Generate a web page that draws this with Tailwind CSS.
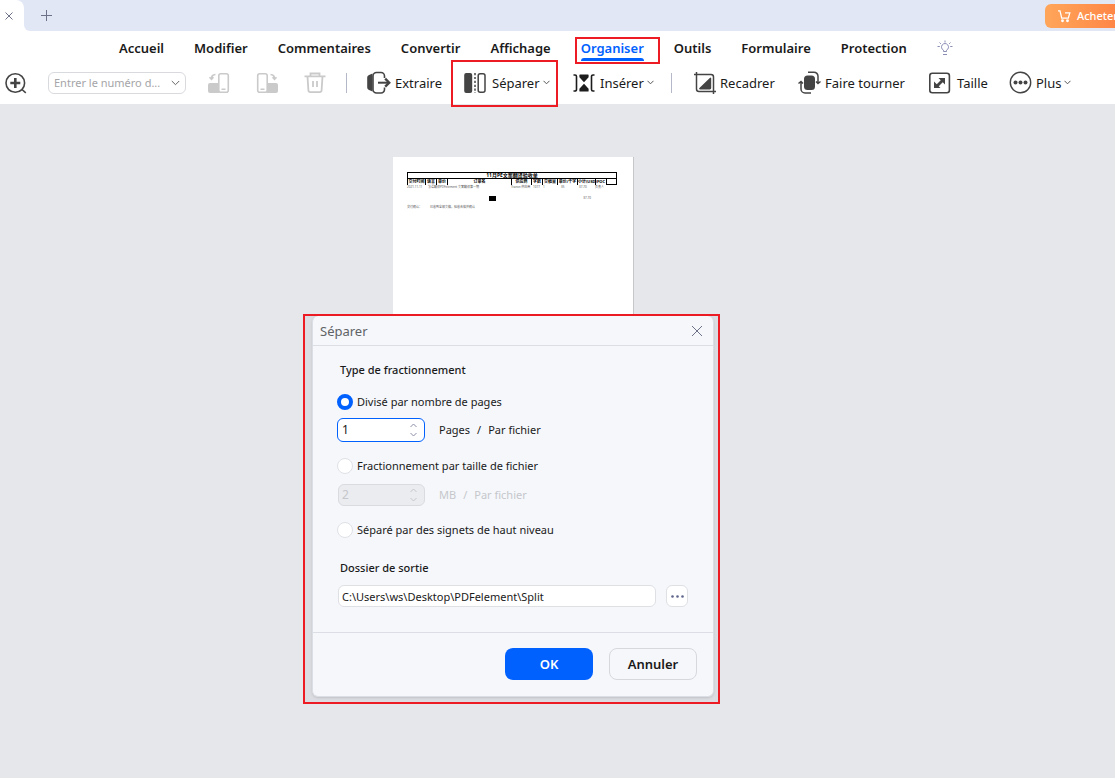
<!DOCTYPE html>
<html lang="fr">
<head>
<meta charset="utf-8">
<title>PDFelement – Organiser</title>
<meta name="viewport" content="width=device-width, initial-scale=1">
<script src="https://cdn.jsdelivr.net/npm/@tailwindcss/browser@4"></script>
</head>
<body class="flex h-screen flex-col overflow-hidden bg-[#e6e7eb] font-['Noto_Sans','Noto_Sans_CJK_SC',sans-serif] text-[13px] leading-5 text-[#1a1a1a]">

<header class="shrink-0 bg-white">
  <!-- Tab strip -->
  <div class="flex h-[31px]">
    <div class="bg-[#e1e7f4]">
      <div class="flex h-full w-6 items-center rounded-tr-lg bg-white pl-1">
        <button type="button" aria-label="Fermer l'onglet" class="text-[#6d7288]">
          <svg class="block size-[10px]" viewBox="0 0 10 10" fill="none" stroke="currentColor"><path d="M1.500 1.500l7 7M8.500 1.500l-7 7"/></svg>
        </button>
      </div>
    </div>
    <div class="flex flex-1 items-center justify-between overflow-hidden rounded-bl-md bg-[#e1e7f4] pl-4">
      <button type="button" aria-label="Nouvel onglet" class="text-[#6d7288]">
        <svg class="block size-[13px]" viewBox="0 0 13 13" fill="none" stroke="currentColor"><path d="M6.500 1v11M1 6.500h11"/></svg>
      </button>
      <button type="button" class="flex h-6 w-[70px] shrink-0 items-center gap-[6px] rounded-l-md bg-linear-to-r from-[#ffa65a] to-[#ff8646] pl-3 text-[11px] font-medium whitespace-nowrap text-white">
        <svg class="block size-[14px] shrink-0" viewBox="0 0 14 14" fill="none" stroke="currentColor" stroke-width="1.300"><path d="M1 1.800h2l1.700 7.400h6.600L12.800 3.800H8"/><circle cx="5.500" cy="11.800" r=".8"/><circle cx="10.500" cy="11.800" r=".8"/></svg>
        Acheter
      </button>
    </div>
  </div>

  <!-- Menu -->
  <nav class="flex h-[33px] items-center gap-[30px] pl-[119px] font-semibold whitespace-nowrap">
    <a href="#">Accueil</a>
    <a href="#">Modifier</a>
    <a href="#">Commentaires</a>
    <a href="#">Convertir</a>
    <a href="#">Affichage</a>
    <a href="#" class="relative text-[#0061ff]">Organiser
      <span class="absolute inset-x-0 -bottom-[3px] h-[3px] rounded-t-full bg-[#0061ff]"></span>
      <span class="absolute -top-[1px] -right-4 -bottom-[6px] -left-[6px] border-2 border-[#ed1c24]"></span>
    </a>
    <a href="#">Outils</a>
    <a href="#">Formulaire</a>
    <a href="#">Protection</a>
    <button type="button" aria-label="Astuces" class="text-[#8a8eb5]">
      <svg class="block size-4" viewBox="0 0 16 16" fill="none" stroke="currentColor"><path d="M6.500 11.500v-1.300a3.500 3.500 0 1 1 3 0v1.300zM6 14.500h4M8 .5v2M2.500 2.500l1.400 1.400M13.500 2.500l-1.400 1.400M.5 6.500h2.300M13.200 6.500h2.300"/></svg>
    </button>
  </nav>

  <!-- Toolbar -->
  <div class="flex h-10 items-center pb-[3px] whitespace-nowrap">
    <button type="button" aria-label="Zoom avant" class="ml-1 shrink-0 text-[#444]">
      <svg class="block size-6" viewBox="0 0 24 24" fill="none" stroke="currentColor" stroke-width="1.600"><circle cx="11.300" cy="12" r="9.300"/><path d="M18 18.500l3.800 3.300"/><path stroke-width="2.600" d="M11.300 7v10M6.300 12h10"/></svg>
    </button>
    <div class="relative ml-5 w-[138px] shrink-0">
      <select aria-label="Numéro de page" class="block h-[22px] w-full appearance-none rounded-md border border-[#d9dade] bg-white pr-4 pl-[5px] text-[11px] text-[#a5a5a8]"><option>Entrer le numéro d...</option></select>
      <svg class="pointer-events-none absolute top-2 right-[6px] h-[6px] w-[9px]" viewBox="0 0 9 6" fill="none" stroke="#666"><path d="M.8 1l3.700 3.700L8.200 1"/></svg>
    </div>
    <button type="button" disabled aria-label="Pivoter à gauche" class="ml-[22px] shrink-0 text-[#cacaca]">
      <svg class="block size-[22px]" viewBox="0 0 22 22" fill="none" stroke="currentColor" stroke-width="1.600"><path fill="currentColor" stroke="none" d="M2 11h9v10H2a2 2 0 0 1-2-2v-6a2 2 0 0 1 2-2z"/><rect x="10.800" y="1.700" width="9.500" height="18.600" rx="2" fill="#fff"/><path d="M13.500 17.200h4M3.500 6.500c0-2.500 1-3.800 4-4M1.500 5.300l2 2 2-2"/></svg>
    </button>
    <button type="button" disabled aria-label="Pivoter à droite" class="ml-[26px] shrink-0 text-[#cacaca]">
      <svg class="block size-[22px]" viewBox="0 0 22 22" fill="none" stroke="currentColor" stroke-width="1.600"><path fill="currentColor" stroke="none" d="M11 11h9a2 2 0 0 1 2 2v6a2 2 0 0 1-2 2h-9z"/><rect x="1.700" y="1.700" width="9.500" height="18.600" rx="2" fill="#fff"/><path d="M4.500 17.200h4M18.500 6.500c0-2.500-1-3.800-4-4M16.500 5.300l2 2 2-2"/></svg>
    </button>
    <button type="button" disabled aria-label="Supprimer" class="ml-[26px] shrink-0 text-[#cacaca]">
      <svg class="block size-[22px]" viewBox="0 0 22 22" fill="none" stroke="currentColor" stroke-width="1.800"><path d="M.5 4.300h21M6.500 4V1.500h9V4M3.500 4.500l.9 13.800a2 2 0 0 0 2 1.900h9.200a2 2 0 0 0 2-1.900l.9-13.800M9 9v6M13 9v6"/></svg>
    </button>
    <span class="ml-5 h-5 w-px shrink-0 bg-[#b5b8c8]"></span>
    <button type="button" class="ml-5 flex w-[73px] shrink-0 items-center gap-1">
      <svg class="block size-6 shrink-0" viewBox="0 0 24 24" fill="none" stroke="#444" stroke-width="1.600"><path fill="#444" stroke="none" d="M5.500 2.500v18L2 19a2.500 2.500 0 0 1-1.800-2.500v-10A2.500 2.500 0 0 1 2 4z"/><path d="M17.500 7V5a3.500 3.500 0 0 0-3.500-3.500H9.500A3.500 3.500 0 0 0 6 5v13.500A3.500 3.500 0 0 0 9.500 22H14a3.500 3.500 0 0 0 3.500-3.500v-2"/><path stroke-width="2" d="M11 11.700h11"/><path stroke-width="2.400" d="M18.200 7.700l4 4-4 4"/></svg>
      Extraire
    </button>
    <button type="button" class="relative ml-6 flex w-[84px] shrink-0 items-center gap-[6px]">
      <svg class="block size-[22px] shrink-0" viewBox="0 0 22 22" fill="none" stroke="#444" stroke-width="1.500"><rect x=".2" y="1" width="8" height="20" rx="2" fill="#444" stroke="none"/><path stroke-dasharray="2.200 1.700" d="M11 1v20"/><rect x="14.200" y="1.700" width="6.800" height="18.600" rx="2"/></svg>
      <span class="flex items-center gap-[3px]">Séparer<svg class="block h-[5px] w-[7px]" viewBox="0 0 7 5" fill="none" stroke="#555"><path d="M.5.8l3 3 3-3"/></svg></span>
      <span class="absolute -top-3 -right-[10px] -bottom-[13px] -left-[13px] border-2 border-[#ed1c24]"></span>
    </button>
    <button type="button" class="ml-[25px] flex w-[79px] shrink-0 items-center gap-[5px]">
      <svg class="block size-[22px] shrink-0" viewBox="0 0 22 22" fill="none" stroke="#1c1c1c" stroke-width="1.600"><path d="M.5 3H2a1.500 1.500 0 0 1 1.500 1.500v13A1.500 1.500 0 0 1 2 19H.5M21.500 3H20a1.500 1.500 0 0 0-1.500 1.500v13A1.500 1.500 0 0 0 20 19h1.500"/><path fill="#1c1c1c" stroke="none" d="M7 2.500h8a.6.6 0 0 1 .6.600v2.200L11 10.300 6.400 5.300V3.100A.6.6 0 0 1 7 2.500zM7 19.500h8a.6.6 0 0 0 .6-.6v-2.200L11 11.700l-4.600 5v2.200a.6.600 0 0 0 .6.600z"/></svg>
      <span class="flex items-center gap-[3px]">Insérer<svg class="block h-[5px] w-[7px]" viewBox="0 0 7 5" fill="none" stroke="#555"><path d="M.5.8l3 3 3-3"/></svg></span>
    </button>
    <span class="ml-[19px] h-5 w-px shrink-0 bg-[#b5b8c8]"></span>
    <button type="button" class="ml-[22px] flex w-[80px] shrink-0 items-center gap-1">
      <svg class="block size-[22px] shrink-0" viewBox="0 0 22 22" fill="none" stroke="#444" stroke-width="1.500"><path d="M0 2.500h17a2.500 2.500 0 0 1 2.500 2.500v17M2.500 0v17A2.500 2.500 0 0 0 5 19.500h17"/><path fill="#444" stroke="none" d="M17.200 6.500v9.500a1.400 1.400 0 0 1-1.400 1.400H6a.8.8 0 0 1-.6-1.400L15.800 5.900a.8.800 0 0 1 1.400.6z"/></svg>
      Recadrer
    </button>
    <button type="button" class="ml-6 flex w-[107px] shrink-0 items-center gap-1">
      <svg class="block size-[23px] shrink-0" viewBox="0 0 23 23" fill="none" stroke="#444" stroke-width="1.500"><rect x="6" y="4.500" width="11" height="14.500" rx="3.500" fill="#444" stroke="none"/><path d="M10 1.200h6a4 4 0 0 1 4 4V12M18 10.500l2 2 2.500-2M13 22H7a4 4 0 0 1-4-4v-7M5 12.500l-2-2-2.500 2"/></svg>
      Faire tourner
    </button>
    <button type="button" class="ml-6 flex w-[56px] shrink-0 items-center gap-[6px]">
      <svg class="block size-[22px] shrink-0" viewBox="0 0 22 22" fill="none" stroke="#444" stroke-width="1.600"><rect x=".8" y="1.300" width="19.600" height="19.400" rx="2.500"/><path stroke-width="2.800" d="M7.500 14.500l7-7"/><path fill="#444" stroke="none" d="M9.500 6h6.500v6.500zM5 9.500V16h6.500z"/></svg>
      Taille
    </button>
    <button type="button" class="ml-6 flex shrink-0 items-center gap-1">
      <svg class="block size-[23px] shrink-0" viewBox="0 0 23 23" fill="none" stroke="#444" stroke-width="1.400"><circle cx="11.500" cy="11.500" r="10.200"/><g fill="#444" stroke="none"><circle cx="6.500" cy="11.500" r="2"/><circle cx="11.500" cy="11.500" r="2"/><circle cx="16.500" cy="11.500" r="2"/></g></svg>
      <span class="flex items-center gap-[3px]">Plus<svg class="block h-[5px] w-[7px]" viewBox="0 0 7 5" fill="none" stroke="#555"><path d="M.5.8l3 3 3-3"/></svg></span>
    </button>
  </div>
</header>

<main class="relative flex-1 pt-[53px]">
  <!-- Page thumbnail -->
  <article class="ml-[393px] h-[340px] w-[241px] border-r border-[#c6c7cb] bg-white px-[14px] pt-[15px] text-[4px] leading-[5px] text-[#555]">
    <table class="w-[209px] table-fixed border-collapse text-center text-black">
      <colgroup><col class="w-[18px]"><col class="w-[11px]"><col class="w-[11px]"><col class="w-[64px]"><col class="w-[20px]"><col class="w-[11px]"><col class="w-[15px]"><col class="w-[20px]"><col class="w-[18px]"><col class="w-[11px]"><col class="w-[10px]"></colgroup>
      <thead>
        <tr class="h-[6px]"><th colspan="11" class="border border-black p-0 text-[5px] leading-[5px] font-bold whitespace-nowrap">11月PE文案翻译验收单</th></tr>
        <tr class="h-[6px] font-bold whitespace-nowrap">
          <th class="border-x border-black p-0">交付时间</th><th class="border-x border-black p-0">语言</th><th class="border-x border-black p-0">单价</th><th class="border-x border-black p-0">订单名</th><th class="border-x border-black p-0">供应商</th><th class="border-x border-black p-0">字数</th><th class="border-x border-black p-0">交稿量</th><th class="border-x border-black p-0">单价/千字</th><th class="border-x border-black p-0">小计(USD)</th><th class="border-x border-black p-0">POC</th><th class="border border-black p-0"></th>
        </tr>
      </thead>
    </table>
    <div class="flex text-[3px] leading-[4px] whitespace-nowrap">
      <span class="w-[21px]">2021.11.11</span><span class="w-[83px]">法语翻译PDFelement 文案翻译第一期</span><span class="w-[22px]">Transn 供应商</span><span class="w-[10px]">1077</span><span class="w-[18px]">1</span><span class="w-[18px]">35</span><span class="w-[16px]">37.70</span><span>负责人</span>
    </div>
    <div class="mt-[7px] flex items-center justify-between pr-7 pl-[82px] text-[3px]"><span class="h-[5px] w-[7px] bg-black"></span><span>37.70</span></div>
    <div class="mt-1 flex gap-2 text-[3px] leading-[4px]"><span>交付确认：</span><span>已收到全部文稿，验收合格并确认</span></div>
  </article>

  <!-- Split dialog with its highlight frame -->
  <div class="absolute top-[210px] left-[303px] w-[417px] border-2 border-[#ed1c24] bg-[#dcdde2] pr-1 pb-[5px] pl-[7px]">
    <form role="dialog" aria-labelledby="dlg-title" class="rounded-md border border-[#dcdee5] border-t-0 bg-[#f5f7fb] text-[11px] text-[#1a1a1a] shadow-sm">
      <div class="flex h-[30px] items-center justify-between border-b border-[#dcdee5] pr-[10px] pl-[7px]">
        <h2 id="dlg-title" class="text-[13px] text-[#606266]">Séparer</h2>
        <button type="button" aria-label="Fermer" class="text-[#6d7288]"><svg class="block size-3" viewBox="0 0 12 12" fill="none" stroke="currentColor"><path d="M1 1l10 10M11 1L1 11"/></svg></button>
      </div>
      <div class="flex flex-col pr-[25px] pb-[25px] pl-6">
        <h3 class="mt-[14px] pl-[3px] font-medium">Type de fractionnement</h3>
        <label class="mt-3 flex items-center gap-1 self-start"><input type="radio" name="mode" checked class="size-4 appearance-none rounded-full border border-[#dfe1e6] bg-white checked:border-4 checked:border-[#0061ff]">Divisé par nombre de pages</label>
        <div class="mt-[6px] flex items-center gap-[14px]">
          <div class="flex h-6 w-[88px] items-center rounded-md border border-[#0061ff] bg-white pr-[6px] pl-1">
            <input type="text" inputmode="numeric" aria-label="Pages par fichier" value="1" class="w-full min-w-0 flex-1 text-[12px] outline-none">
            <div class="flex flex-col gap-1 text-[#8c8fa8]">
              <button type="button" aria-label="Augmenter"><svg class="block h-[5px] w-[9px]" viewBox="0 0 9 5" fill="none" stroke="currentColor"><path d="M1.500 4l3-3 3 3"/></svg></button>
              <button type="button" aria-label="Diminuer"><svg class="block h-[5px] w-[9px]" viewBox="0 0 9 5" fill="none" stroke="currentColor"><path d="M1.500 1l3 3 3-3"/></svg></button>
            </div>
          </div>
          <span class="flex gap-[7px]"><span>Pages</span><span>/</span><span>Par fichier</span></span>
        </div>
        <label class="mt-[14px] flex items-center gap-1 self-start"><input type="radio" name="mode" class="size-4 appearance-none rounded-full border border-[#dfe1e6] bg-white checked:border-4 checked:border-[#0061ff]">Fractionnement par taille de fichier</label>
        <div class="mt-2 flex items-center gap-[14px] text-[#c6c7cb]">
          <div class="ml-px flex h-[22px] w-[87px] items-center rounded-md border border-[#d9dbe0] bg-[#ebecf0] pr-[6px] pl-[3px]">
            <input type="text" inputmode="numeric" aria-label="MB par fichier" value="2" disabled class="w-full min-w-0 flex-1 text-[12px]">
            <div class="flex flex-col gap-1">
              <button type="button" disabled aria-label="Augmenter"><svg class="block h-[5px] w-[9px]" viewBox="0 0 9 5" fill="none" stroke="currentColor"><path d="M1.500 4l3-3 3 3"/></svg></button>
              <button type="button" disabled aria-label="Diminuer"><svg class="block h-[5px] w-[9px]" viewBox="0 0 9 5" fill="none" stroke="currentColor"><path d="M1.500 1l3 3 3-3"/></svg></button>
            </div>
          </div>
          <span class="flex gap-[7px]"><span>MB</span><span>/</span><span>Par fichier</span></span>
        </div>
        <label class="mt-[14px] flex items-center gap-1 self-start"><input type="radio" name="mode" class="size-4 appearance-none rounded-full border border-[#dfe1e6] bg-white checked:border-4 checked:border-[#0061ff]">Séparé par des signets de haut niveau</label>
        <label for="out" class="mt-[18px] self-start pl-[3px] font-medium">Dossier de sortie</label>
        <div class="mt-[7px] ml-px flex gap-[10px]">
          <input id="out" type="text" value="C:\Users\ws\Desktop\PDFelement\Split" class="h-[22px] min-w-0 flex-1 rounded-md border border-[#dfe0e4] bg-white px-[3px]">
          <button type="button" aria-label="Parcourir" class="flex size-[22px] items-center justify-center rounded-md border border-[#dfe0e4] bg-white"><svg class="block h-[3px] w-[13px]" viewBox="0 0 13 3" fill="#5f658c"><circle cx="1.500" cy="1.500" r="1.300"/><circle cx="6.500" cy="1.500" r="1.300"/><circle cx="11.500" cy="1.500" r="1.300"/></svg></button>
        </div>
      </div>
      <div class="flex justify-end gap-4 border-t border-[#dcdee5] px-4 pt-[15px] pb-4 text-[13px]">
        <button type="submit" class="h-8 w-[88px] rounded-lg bg-[#0061ff] font-semibold text-white">OK</button>
        <button type="button" class="h-8 w-[88px] rounded-lg border border-[#d6d8de] font-semibold">Annuler</button>
      </div>
    </form>
  </div>
</main>
</body>
</html>
